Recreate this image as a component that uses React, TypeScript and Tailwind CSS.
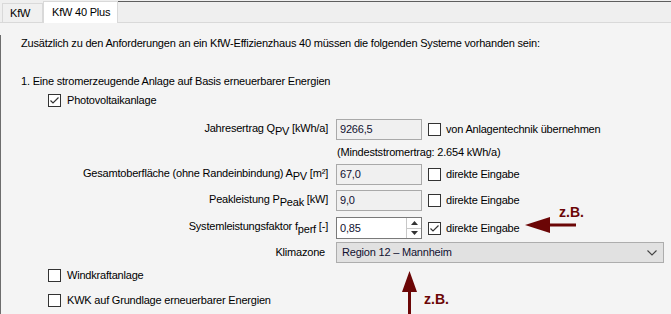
import { ReactNode } from "react"

function Check({ checked = false }: { checked?: boolean }) {
  return (
    <span className="w-[13px] h-[13px] border border-[#333333] bg-white flex items-center justify-center shrink-0">
      {checked && (
        <svg width="11" height="11" viewBox="0 0 11 11">
          <path d="M1.5 5.5 L4 8 L9.5 2.5" stroke="#333333" strokeWidth="1.2" fill="none" />
        </svg>
      )}
    </span>
  )
}

function Field({ label, value, h = "h-[21px]", mt, side, sideChecked, spin }: {
  label: ReactNode
  value: string
  h?: string
  mt: string
  side: string
  sideChecked?: boolean
  spin?: boolean
}) {
  return (
    <div className={`flex items-center ${h} ${mt}`}>
      <div className="w-[327px] text-right whitespace-nowrap">{label}</div>
      <div
        className={`ml-[8px] w-[86px] h-full flex items-center border ${
          spin ? "bg-white border-[#7a7a7a]" : "bg-[#f0f0f0] border-[#a9a9a9]"
        }`}
      >
        <span className="pl-[3px] flex-1 text-[#101030]">{value}</span>
        {spin && (
          <span className="w-[15px] h-full flex flex-col border-l border-[#c8c8c8]">
            <span className="flex-1 flex items-center justify-center border-b border-[#c8c8c8]">
              <svg width="7" height="4" viewBox="0 0 7 4"><path d="M0 4 L3.5 0 L7 4Z" fill="#333" /></svg>
            </span>
            <span className="flex-1 flex items-center justify-center">
              <svg width="7" height="4" viewBox="0 0 7 4"><path d="M0 0 L3.5 4 L7 0Z" fill="#333" /></svg>
            </span>
          </span>
        )}
      </div>
      <div className="ml-[6px] flex items-center gap-[5px]">
        <Check checked={sideChecked} />
        <span>{side}</span>
      </div>
    </div>
  )
}

function App() {
  return (
    <div className="w-[671px] h-[314px] overflow-hidden bg-[#f4f4f4] text-[11px] tracking-[-0.2px] text-black relative font-['Liberation_Sans',Arial,sans-serif]">
      {/* tab strip */}
      <div className="h-[23px] bg-[#efefef] flex items-end border-b border-[#d9d9d9] relative">
        <div className="ml-[2px] h-[19px] w-[41px] border border-b-0 border-[#d9d9d9] bg-[#f0f0f0] flex items-center pl-[7px]">
          KfW
        </div>
        <div className="h-[22px] w-[75px] border border-b-0 border-[#d9d9d9] bg-white flex items-center pl-[8px] -mb-px">
          KfW 40 Plus
        </div>
        <div className="flex-1 h-[22px] self-start border-t border-[#5e5e5e] mt-[1px]" />
      </div>

      <div className="border-l border-[#6d6d6d] h-full">
        <div className="pl-[20px] mt-[12px] h-[16px] flex items-center">
          Zusätzlich zu den Anforderungen an ein KfW-Effizienzhaus 40 müssen die folgenden Systeme vorhanden sein:
        </div>
        <div className="pl-[20px] mt-[22px] h-[16px] flex items-center">
          1. Eine stromerzeugende Anlage auf Basis erneuerbarer Energien
        </div>
        <div className="pl-[47px] mt-[3px] h-[16px] flex items-center gap-[6px]">
          <Check checked />
          <span>Photovoltaikanlage</span>
        </div>

        <Field
          mt="mt-[11px]"
          label={<>Jahresertrag Q<span className="align-sub">PV</span> [kWh/a]</>}
          value="9266,5"
          side="von Anlagentechnik übernehmen"
        />
        <div className="mt-[4px] h-[16px] flex items-center pl-[336px]">
          (Mindeststromertrag: 2.654 kWh/a)
        </div>
        <Field
          mt="mt-[4px]"
          label={<>Gesamtoberfläche (ohne Randeinbindung) A<span className="align-sub">PV</span> [m²]</>}
          value="67,0"
          side="direkte Eingabe"
        />
        <Field
          mt="mt-[5px]"
          label={<>Peakleistung P<span className="align-sub">Peak</span> [kW]</>}
          value="9,0"
          side="direkte Eingabe"
        />
        <Field
          mt="mt-[6px]"
          h="h-[22px]"
          label={<>Systemleistungsfaktor f<span className="align-sub">perf</span> [-]</>}
          value="0,85"
          side="direkte Eingabe"
          sideChecked
          spin
        />
        <div className="mt-[3px] h-[21px] flex items-center">
          <div className="w-[327px] text-right pr-[3px]">Klimazone</div>
          <div className="ml-[8px] w-[328px] h-full bg-[#e1e1e1] border border-[#adadad] flex items-center justify-between pl-[5px] pr-[6px]">
            <span className="text-[#101030]">Region 12 – Mannheim</span>
            <svg width="10" height="6" viewBox="0 0 10 6">
              <path d="M0.5 0.5 L5 5 L9.5 0.5" stroke="#444" strokeWidth="1.1" fill="none" />
            </svg>
          </div>
        </div>
        <div className="pl-[47px] mt-[4px] h-[16px] flex items-center gap-[6px]">
          <Check />
          <span>Windkraftanlage</span>
        </div>
        <div className="pl-[47px] mt-[9px] h-[16px] flex items-center gap-[6px]">
          <Check />
          <span>KWK auf Grundlage erneuerbarer Energien</span>
        </div>
      </div>

      {/* annotation arrows */}
      <svg className="absolute left-[522px] top-[215px]" width="58" height="22" viewBox="0 0 58 22">
        <path d="M3 10 L28 2 L28 8.5 L54 8.5 L54 11.5 L28 11.5 L28 18 Z" fill="#6b0606" />
      </svg>
      <span className="absolute left-[559px] top-[202px] text-[14px] tracking-normal font-bold text-[#6b0606]">
        z.B.
      </span>
      <svg className="absolute left-[400px] top-[268px]" width="20" height="46" viewBox="0 0 20 46">
        <path d="M9.5 3 L17 24 L11 24 L11 46 L8 46 L8 24 L2 24 Z" fill="#6b0606" />
      </svg>
      <span className="absolute left-[424px] top-[289px] text-[14px] tracking-normal font-bold text-[#6b0606]">
        z.B.
      </span>
    </div>
  )
}

export default App
